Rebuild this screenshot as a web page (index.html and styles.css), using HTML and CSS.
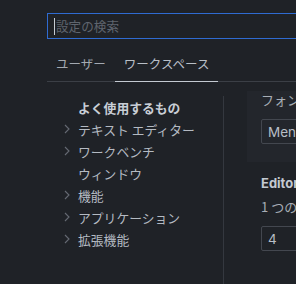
FILE: index.html
```html
<!DOCTYPE html>
<html lang="ja">
<head>
  <meta charset="UTF-8">
  <title>設定</title>
  <link rel="stylesheet" href="styles.css">
</head>
<body>
  <div class="settings">
    <div class="settings_search">
      <span class="settings_caret"></span>
      <span class="settings_placeholder">設定の検索</span>
    </div>

    <div class="settings_tabs">
      <span class="settings_tab">ユーザー</span>
      <span class="settings_tab active">ワークスペース</span>
    </div>

    <div class="settings_body">
      <nav class="settings_toc">
        <div class="toc_row bold"><span class="toc_chevron"></span>よく使用するもの</div>
        <div class="toc_row"><span class="toc_chevron"><svg width="6" height="10" viewBox="0 0 6 10"><path d="M1 1l4 4-4 4" fill="none" stroke="currentColor" stroke-width="1.1"/></svg></span>テキスト エディター</div>
        <div class="toc_row"><span class="toc_chevron"><svg width="6" height="10" viewBox="0 0 6 10"><path d="M1 1l4 4-4 4" fill="none" stroke="currentColor" stroke-width="1.1"/></svg></span>ワークベンチ</div>
        <div class="toc_row"><span class="toc_chevron"></span>ウィンドウ</div>
        <div class="toc_row"><span class="toc_chevron"><svg width="6" height="10" viewBox="0 0 6 10"><path d="M1 1l4 4-4 4" fill="none" stroke="currentColor" stroke-width="1.1"/></svg></span>機能</div>
        <div class="toc_row"><span class="toc_chevron"><svg width="6" height="10" viewBox="0 0 6 10"><path d="M1 1l4 4-4 4" fill="none" stroke="currentColor" stroke-width="1.1"/></svg></span>アプリケーション</div>
        <div class="toc_row"><span class="toc_chevron"><svg width="6" height="10" viewBox="0 0 6 10"><path d="M1 1l4 4-4 4" fill="none" stroke="currentColor" stroke-width="1.1"/></svg></span>拡張機能</div>
      </nav>

      <div class="settings_content">
        <div class="setting_item focused">
          <div class="setting_desc top">フォントファミリを制御します。</div>
          <div class="setting_field">Menlo, Monaco, 'Courier New', monospace</div>
        </div>
        <div class="setting_item">
          <div class="setting_title">Editor: Tab Size</div>
          <div class="setting_desc">1 つのタブに相当するスペースの数。</div>
          <div class="setting_field small">4</div>
        </div>
      </div>
    </div>
  </div>
</body>
</html>
```

FILE: styles.css
```css
body {
  margin: 0;
  padding: 0;
  background-color: #1f2227;
  font-family: "Noto Sans CJK JP", "Noto Sans", sans-serif;
  font-size: 13px;
  color: #b4bac2;
  overflow: hidden;
}

.settings {
  width: 296px;
  height: 284px;
  padding-left: 47px;
  box-sizing: border-box;
  overflow: hidden;
}

.settings_search {
  width: 300px;
  height: 26px;
  margin-top: 13px;
  border: 1px solid #2f6bd1;
  box-sizing: border-box;
  display: flex;
  align-items: center;
  padding-left: 6px;
  font-size: 12.6px;
}

.settings_caret {
  width: 1px;
  height: 17px;
  background-color: #c6ccd4;
  margin-right: 1px;
}

.settings_placeholder {
  color: #5f656e;
  line-height: 20px;
}

.settings_tabs {
  width: 300px;
  display: flex;
  margin-top: 15px;
  border-bottom: 1px solid #3b3f46;
}

.settings_tab {
  padding: 0 9px 7px;
  line-height: 20px;
  font-size: 12.5px;
  color: #a3a9b1;
}

.settings_tab.active {
  color: #b9bfc7;
  border-bottom: 1px solid #c4cad2;
  margin-bottom: -1px;
}

.settings_body {
  display: flex;
  margin-top: 14px;
}

.settings_toc {
  width: 176px;
  flex-shrink: 0;
  border-right: 1px solid #34383f;
  height: 200px;
}

.toc_row {
  display: flex;
  align-items: center;
  height: 22px;
  padding-left: 13px;
  white-space: nowrap;
  font-size: 12.8px;
}

.toc_row.bold {
  font-weight: bold;
  color: #c8ced6;
}

.toc_chevron {
  width: 18px;
  display: flex;
  align-items: center;
  padding-left: 4px;
  box-sizing: border-box;
  color: #656a73;
}

.settings_content {
  padding-left: 23px;
  flex-shrink: 0;
  width: 300px;
}

.setting_item {
  padding: 0 0 0 14px;
}

.setting_item.focused {
  background-color: #23262c;
  padding-bottom: 18px;
}

.setting_desc {
  line-height: 18px;
  white-space: nowrap;
  color: #a7adb5;
  margin-top: 6px;
}

.setting_desc.top {
  margin-top: -5px;
}

.setting_title {
  margin-top: 12px;
  line-height: 18px;
  font-weight: bold;
  color: #c3c9d1;
  font-family: "Inter", "Noto Sans CJK JP", sans-serif;
}

.setting_field {
  margin-top: 10px;
  height: 25px;
  box-sizing: border-box;
  border: 1px solid #43474f;
  border-radius: 2px;
  padding-left: 6px;
  display: flex;
  align-items: center;
  white-space: nowrap;
  font-family: "Inter", sans-serif;
  font-size: 13.5px;
  color: #b8bec6;
  width: 300px;
}
```
